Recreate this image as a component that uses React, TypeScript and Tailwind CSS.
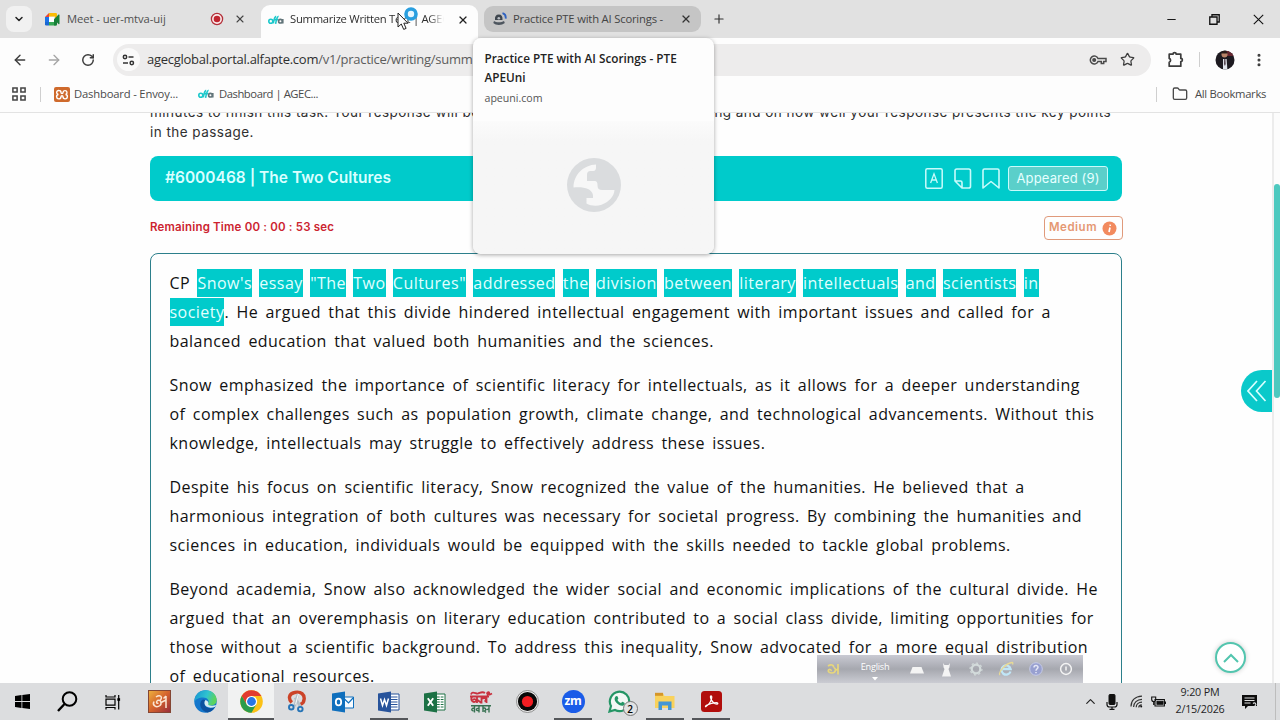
import React from "react";
import { ArrowLeft, ArrowRight, ChevronDown, ChevronUp, X, Plus, Minus, Star, Folder, RotateCw, MoreVertical } from "lucide-react";

const passage: string[][] = [
  [
    "balanced education that valued both humanities and the sciences.",
  ],
  [
    "Snow emphasized the importance of scientific literacy for intellectuals, as it allows for a deeper understanding",
    "of complex challenges such as population growth, climate change, and technological advancements. Without this",
    "knowledge, intellectuals may struggle to effectively address these issues.",
  ],
  [
    "Despite his focus on scientific literacy, Snow recognized the value of the humanities. He believed that a",
    "harmonious integration of both cultures was necessary for societal progress. By combining the humanities and",
    "sciences in education, individuals would be equipped with the skills needed to tackle global problems.",
  ],
  [
    "Beyond academia, Snow also acknowledged the wider social and economic implications of the cultural divide. He",
    "argued that an overemphasis on literary education contributed to a social class divide, limiting opportunities for",
    "those without a scientific background. To address this inequality, Snow advocated for a more equal distribution",
    "of educational resources.",
  ],
];

const marked = ["Snow's", "essay", "\"The", "Two", "Cultures\"", "addressed", "the", "division", "between", "literary", "intellectuals", "and", "scientists", "in"];

function Mark({ children }: { children: React.ReactNode }) {
  return <span className="inline-block h-[28px] bg-[#00cbcb] leading-[28px] text-[#e2ffff]">{children}</span>;
}

function AlfaLogo() {
  return (
    <svg className="shrink-0" width="16" height="10" viewBox="0 0 16 10" fill="none" strokeWidth="1.6">
      <circle cx="2.8" cy="6.2" r="2" stroke="#1cc8cb" />
      <path d="M5.3 8.4C6 4 7 1.6 8.2 1.4M7.6 8.8C8.4 4 9.2 1.4 10.6 1.2M6 4.6h4.4" stroke="#1cc8cb" />
      <circle cx="12.4" cy="6.2" r="1.8" stroke="#62757a" />
      <path d="M14.8 4v4.4" stroke="#62757a" />
    </svg>
  );
}

function MeetLogo() {
  return (
    <svg className="shrink-0" width="16" height="13" viewBox="0 0 16 13">
      <path d="M4 0h6.500v3.500H4z" fill="#fbbc04" />
      <path d="M0 4l4-4v4z" fill="#ea4335" />
      <path d="M0 4h4v5H0z" fill="#1a73e8" />
      <path d="M0 9h4v3.500H1.200A1.200 1.200 0 0 1 0 11.300z" fill="#1967d2" />
      <path d="M4 9h7.500v3.500H4z" fill="#34a853" />
      <path d="M10 3.500V0h.8a1.200 1.200 0 0 1 1.200 1.200V4l-2 2.300z" fill="#fbbc04" />
      <path d="M9 6.300 13.500 1.600c.5-.4 1-.2 1 .4v8.600c0 .6-.5.8-1 .4L12 9.600v1.700a1.200 1.200 0 0 1-1.200 1.200H9z" fill="#188038" />
      <path d="M4 4h5v5H4z" fill="#fff" />
    </svg>
  );
}

function TabStrip() {
  return (
    <div className="flex h-[38px] shrink-0 items-start bg-[#e1e1e1] text-[11.25px] text-[#2e2e2e]">
      <div className="ml-[6px] mt-[6px] flex h-[26px] w-[26px] items-center justify-center rounded-lg bg-[#f1f1f1]">
        <ChevronDown size={12} strokeWidth={3} className="text-[#222]" />
      </div>
      <div className="flex h-[38px] w-[229px] items-center pl-[13px] pr-[15px]">
        <MeetLogo />
        <span className="ml-[6px] flex-1 whitespace-nowrap tracking-[-0.08px] text-[#505050]">Meet - uer-mtva-uij</span>
        <svg width="14" height="14" viewBox="0 0 14 14"><circle cx="7" cy="7" r="5.600" fill="#fbeaea" stroke="#b3303a" strokeWidth="1.300" /><circle cx="7" cy="7" r="3.300" fill="#c02530" /></svg>
        <X size={12} strokeWidth={2.2} className="ml-[10px] text-[#444]" />
      </div>
      <div className="mt-[5px] flex h-[33px] w-[217px] items-center rounded-t-[9px] bg-[#fdfdfd] pb-[4px] pl-[7px] pr-[9px]">
        <AlfaLogo />
        <span className="ml-[6px] w-[154px] overflow-hidden whitespace-nowrap tracking-[-0.28px] [mask-image:linear-gradient(to_right,black_90%,transparent)]">Summarize Written Text | AGEC</span>
        <span className="flex-1" />
        <X size={12} strokeWidth={2.4} className="text-[#222]" />
      </div>
      <div className="ml-[6px] mt-[6px] flex h-[26px] w-[217px] items-center rounded-[9px] bg-[#c5c5c5] pl-[9px] pr-[9px] text-[#444]">
        <svg className="shrink-0" width="14" height="14" viewBox="0 0 14 14">
          <path d="M2 8c-.4-3.600 1-5.500 3.800-5.500S9.800 4.500 9.500 8z" fill="#3f464e" />
          <path d="M1 9c2 1.800 7.500 1.800 10 0l.8 2c-3 2.600-9 2.600-11.500 0z" fill="#4d555e" />
          <circle cx="5.800" cy="6.300" r="1.300" fill="#b9bec4" />
          <path d="M9.500 1.200c2.300.6 3.500 2.600 3.200 5.400" fill="none" stroke="#2f62c0" strokeWidth="1.800" />
        </svg>
        <span className="ml-[6px] w-[152px] shrink-0 overflow-hidden whitespace-nowrap tracking-[-0.19px]">Practice PTE with AI Scorings - </span>
        <span className="flex-1" />
        <X size={12} strokeWidth={2.4} className="text-[#333]" />
      </div>
      <Plus size={14} strokeWidth={2} className="ml-[11px] mt-[12px] text-[#333]" />
      <div className="ml-auto mr-[16px] flex h-[38px] items-center text-[#111]">
        <Minus size={13} strokeWidth={1.800} />
        <svg className="ml-[31px]" width="11" height="11" viewBox="0 0 10 10" fill="none" stroke="currentColor" strokeWidth="1.200"><path d="M.7 2.700h6.600v6.600H.7zM2.700 2.500V.7h6.600v6.600H7.500" /></svg>
        <svg className="ml-[33px]" width="11" height="11" viewBox="0 0 11 11" stroke="currentColor" strokeWidth="1.100"><path d="M.8.8l9.400 9.400M10.200.8.8 10.200" /></svg>
      </div>
    </div>
  );
}

function Toolbar() {
  return (
    <div className="flex h-[42px] shrink-0 items-center bg-[#fdfdfd] pl-[12px] pt-px text-[#3c3c3c]">
      <ArrowLeft size={16} strokeWidth={2.100} />
      <ArrowRight size={16} strokeWidth={2} className="ml-[18px] text-[#a5a5a5]" />
      <RotateCw size={14} strokeWidth={2.500} className="ml-[19px]" />
      <div className="ml-[18px] flex h-[32px] w-[1038px] items-center rounded-full bg-[#edecec] pl-[4px] pr-[16px]">
        <span className="flex h-[23px] w-[23px] items-center justify-center rounded-full bg-[#fafafa]">
          <svg width="13" height="12" viewBox="0 0 13 12" fill="none" stroke="#333" strokeWidth="1.500"><circle cx="3" cy="3" r="1.700" /><path d="M6.500 3h5M1 9h5" /><circle cx="9.800" cy="9" r="1.700" /></svg>
        </span>
        <span className="ml-[7px] flex-1 whitespace-nowrap text-[13px] tracking-[-0.27px] text-[#2f2f2f]">agecglobal.portal.alfapte.com<span className="text-[#5c5c5c]">/v1/practice/writing/summ</span></span>
        <svg width="18" height="12" viewBox="0 0 18 12" fill="none" stroke="#4a4a4a" strokeWidth="1.500"><path d="M9 4.500a4 4 0 1 0 0 3h3.300v1.900h2.400V7.500H17v-3z" /><circle cx="5.200" cy="6" r="1.300" fill="#4a4a4a" /></svg>
        <Star size={15} strokeWidth={2} className="ml-[13px]" />
      </div>
      <svg className="ml-[16px]" width="18" height="17" viewBox="0 0 18 17" fill="none" stroke="#3c3c3c" strokeWidth="1.700"><path d="M2.200 3.200H6a1.600 1.600 0 0 1 3.200 0h4.600v4.200a1.600 1.600 0 0 1 0 3.200v4.600H2.200v-4a2 2 0 0 0 0-3.800z" strokeLinejoin="round" /></svg>
      <span className="ml-[14px] h-[15px] w-px bg-[#cfcfcf]" />
      <svg className="ml-[15px]" width="20" height="20" viewBox="0 0 20 20">
        <defs><clipPath id="av"><circle cx="10" cy="10" r="9.500" /></clipPath></defs>
        <g clipPath="url(#av)">
          <path d="M0 0h20v20H0z" fill="#1d1a20" /><path d="M11 1h9v5h-9z" fill="#672730" />
          <circle cx="9.500" cy="4.500" r="3" fill="#b98468" /><path d="M6.500 3.500c0-4 6-4 6 0z" fill="#2a1c19" />
          <path d="M8 9h3.600l.8 11H8z" fill="#dfe3ea" /><path d="M9.200 9h1.200l.3 5-.8 2-.9-2z" fill="#51404a" />
        </g>
      </svg>
      <MoreVertical size={16} strokeWidth={2.600} className="ml-[16px]" />
    </div>
  );
}

function Bookmarks() {
  return (
    <div className="flex h-[33px] shrink-0 items-center border-b border-[#e3e3e3] bg-[#fdfdfd] pb-[4px] pl-[12px] pr-[14px] text-[11.25px] text-[#4a4a4a]">
      <svg width="14" height="14" viewBox="0 0 14 14" fill="none" stroke="#444" strokeWidth="1.500"><path d="M.9.9h4.200v4.200H.9zM8.900.9h4.200v4.200H8.900zM.9 8.900h4.200v4.200H.9zM8.900 8.900h4.200v4.200H8.900z" /></svg>
      <span className="ml-[14px] h-[15px] w-px bg-[#cfcfcf]" />
      <svg className="ml-[13px]" width="16" height="15" viewBox="0 0 16 15">
        <rect width="16" height="15" rx="2" fill="#cf6a2c" />
        <path d="M5 3.500a2 2 0 0 1 2 2 1 1 0 0 0 2 0 2 2 0 1 1 2.600 2 2.200 2.200 0 1 1-2.600 2.200 1 1 0 0 0-2 0A2.200 2.200 0 1 1 4.400 7.500 2 2 0 0 1 5 3.500z" fill="none" stroke="#fff" strokeWidth="1.400" />
      </svg>
      <span className="ml-[4px] w-[124px] whitespace-nowrap tracking-[-0.18px]">Dashboard - Envoy...</span>
      <AlfaLogo />
      <span className="ml-[5px] whitespace-nowrap tracking-[-0.45px]">Dashboard | AGEC...</span>
      <span className="ml-auto h-[15px] w-px bg-[#cfcfcf]" />
      <Folder size={16} strokeWidth={2} className="ml-[15px]" />
      <span className="ml-[7px] w-[71px] whitespace-nowrap tracking-[-0.3px]">All Bookmarks</span>
    </div>
  );
}

function QuestionHeader() {
  return (
    <div className="flex h-[45px] shrink-0 items-center rounded-[8px] bg-[#00cbcb] pl-[15px] pr-[14px] font-['Inter',sans-serif] text-white">
      <h1 className="flex-1 whitespace-nowrap pb-px text-[15.5px] font-semibold text-[#d9ffff]">#6000468 | The Two Cultures</h1>
      <svg width="18" height="21" viewBox="0 0 18 21" fill="none" stroke="#c8fbfb" strokeWidth="1.500"><rect x=".8" y=".8" width="16.400" height="19.400" rx="1.500" /><path d="M5.600 15 9 5.800 12.400 15M6.800 12h4.400" strokeWidth="1.300" /></svg>
      <svg className="ml-[11px]" width="18" height="21" viewBox="0 0 18 21" fill="none" stroke="#c8fbfb" strokeWidth="1.600" strokeLinejoin="round"><path d="M1 13V2.800A1.800 1.800 0 0 1 2.800 1h11.900a1.800 1.800 0 0 1 1.800 1.800v15.400a1.800 1.800 0 0 1-1.800 1.800H8zM1 13h5.500A1.500 1.500 0 0 1 8 14.500V20" /></svg>
      <svg className="ml-[10px]" width="18" height="21" viewBox="0 0 18 21" fill="none" stroke="#c8fbfb" strokeWidth="1.600" strokeLinejoin="round"><path d="M1 20V2.500A1.500 1.500 0 0 1 2.500 1h13A1.500 1.500 0 0 1 17 2.500V20l-8-6.500z" /></svg>
      <div className="ml-[8px] flex h-[25px] w-[100px] items-center justify-center whitespace-nowrap rounded-[3px] border border-[#c8fbfb] bg-[#5bcfca] text-[13px] tracking-[0.15px] text-[#e6ffff]">Appeared (9)</div>
    </div>
  );
}

function Passage() {
  return (
    <div className="mt-[13px] flex h-[460px] shrink-0 flex-col gap-[15px] rounded-t-[8px] border border-[#2c7f8b] pl-[18.5px] pt-[15px] text-[16px] leading-[29px] tracking-[0.46px] text-[#111] [word-spacing:2.72px]">
      {passage.map((lines, i) => (
        <div key={i} className="whitespace-nowrap">
          {i === 0 && (
            <>
              <div className="h-[29px]">CP {marked.map((w) => <React.Fragment key={w}><Mark>{w}</Mark> </React.Fragment>)}</div>
              <div className="h-[29px]"><Mark>society</Mark>. He argued that this divide hindered intellectual engagement with important issues and called for a</div>
            </>
          )}
          {lines.map((l) => <div key={l}>{l}</div>)}
        </div>
      ))}
    </div>
  );
}

function HoverCard() {
  return (
    <div className="absolute left-[473px] top-[38px] flex h-[216px] w-[241px] flex-col overflow-hidden rounded-[8px] bg-[#fdfdfd] text-[#222] shadow-[0_1px_4px_rgba(0,0,0,0.35)]">
      <div className="h-[83px] px-[11.500px] pt-[11px]">
        <div className="whitespace-nowrap text-[11.75px] font-semibold leading-[19px]">Practice PTE with AI Scorings - PTE<br />APEUni</div>
        <div className="mt-[3px] text-[10.600px] leading-[16px] text-[#555]">apeuni.com</div>
      </div>
      <div className="flex flex-1 items-center justify-center bg-gradient-to-b from-[#fbfbfb] to-[#f6f6f6] to-15% pb-[6px]">
        <svg width="54" height="54" viewBox="0 0 54 54">
          <circle cx="27" cy="27" r="27" fill="#dadcde" />
          <path d="M29 6.400C17 7 6.500 16 6.500 29.500c5-.5 11-.3 14.500 1.500 4 2 5.500 5 5 9h-6.500v5.500c4 2.300 10 3 15 1.300C42 44 47 38.500 47.500 32H35c-3 0-4.500-1.500-4.500-4.500 0-3-.5-4.500-3-4.500H20v-6c0-2.500 1-4 3.500-4h2.700c2 0 2.800-1.500 2.800-3z" fill="#f7f7f7" />
        </svg>
      </div>
    </div>
  );
}

function Pointer() {
  return (
    <svg className="absolute left-[397px] top-[6px]" width="22" height="25" viewBox="0 0 22 25">
      <circle cx="14" cy="8" r="5" fill="#e8f7ff" stroke="#2a9fdf" strokeWidth="3.600" />
      <path d="M1 7v14l3.300-3 2.400 5.400 2.400-1-2.300-5.200H11z" fill="#fff" stroke="#222" strokeWidth="1" />
    </svg>
  );
}

function LanguageBar() {
  return (
    <div className="absolute left-[817px] top-[655px] flex h-[28px] w-[266px] items-center bg-gradient-to-b from-[#c9cad3] via-[#a6a8af] to-[#cbccd3] text-white">
      <svg className="ml-[9px]" width="14" height="14" viewBox="0 0 14 14" fill="none" stroke="#e8d77c" strokeWidth="1.700"><path d="M2 4C5 1.800 8 3 7.500 5.500M7.500 5.500C10.500 6 10 11 6 11 3.500 11 1.500 9.500 2.500 8 4 6.800 5.500 8 5 9M9 8.500 12 7M12 2v10.500" /></svg>
      <div className="ml-[20px] mt-[2px] flex w-[30px] flex-col items-center">
        <span className="text-[9.200px] leading-[14px] tracking-[-0.25px]">English</span>
        <svg className="mt-[3px]" width="6" height="4" viewBox="0 0 6 4"><path d="M0 0h6L3 3.500z" fill="#fff" /></svg>
      </div>
      <svg className="ml-[20px] mt-[3px]" width="14" height="7" viewBox="0 0 14 7"><path d="M2.500 0h9L14 6.500H0z" fill="#f4f4f4" /></svg>
      <svg className="ml-[17px]" width="11" height="15" viewBox="0 0 11 15"><path d="M2 1l1.500 2h4L9 1l-.6 4.500L7.500 7l2.500 7.500H1L3.500 7 2.600 5.500z" fill="#f4f4f4" /></svg>
      <svg className="ml-[17px]" width="14" height="14" viewBox="0 0 15 15" fill="none" stroke="#d3dbdb"><circle cx="7.500" cy="7.500" r="4.600" strokeWidth="2.400" /><circle cx="7.500" cy="7.500" r="6.400" strokeWidth="1.200" strokeDasharray="2.300 2.600" /></svg>
      <svg className="ml-[15px]" width="16" height="16" viewBox="0 0 16 16" fill="none"><path d="M12.500 10.500A4.600 4.600 0 1 1 12.600 8H5" stroke="#c0e6f7" strokeWidth="2.300" /><path d="M2 14C0 12 6 3 14 1.500c1-.1 1 1 .5 2" stroke="#e8da95" strokeWidth="1.300" /></svg>
      <svg className="ml-[15px]" width="14" height="14" viewBox="0 0 14 14" fill="#98a0d0" stroke="#c6cbe8"><circle cx="7" cy="7" r="6.300" /><path d="M5 5.500C5 3 9 3 9 5.300 9 6.500 7 7 7 8.700M7 10v1.300" fill="none" stroke="#e6e8f6" strokeWidth="1.500" /></svg>
      <svg className="ml-[16px]" width="14" height="14" viewBox="0 0 14 14" fill="none" stroke="#f4f4f4" strokeWidth="1.500"><circle cx="7" cy="7" r="5.400" /><path d="M7 4.500v4" /></svg>
    </div>
  );
}

function OfficeIcon({ kind }: { kind: "outlook" | "word" | "excel" }) {
  const color = kind === "outlook" ? "#0f6fbd" : kind === "word" ? "#27539b" : "#1c7145";
  return (
    <svg width="22" height="22" viewBox="0 0 22 22">
      {kind === "outlook" ? (
        <><path d="M11 6h10.500v11H11z" fill="#f7fbff" stroke={color} /><path d="M11.500 7l5 5 5-5.500" fill="none" stroke={color} strokeWidth="1.200" /></>
      ) : (
        <><path d="M11 3h10v16H11z" fill="#fff" stroke={color} /><path d="M13 6h6.500M13 8.500h6.500M13 11h6.500M13 13.500h6.500M13 16h6.500" stroke={color} strokeWidth="1.100" />{kind === "excel" && <path d="M16.200 4v14" stroke="#fff" />}</>
      )}
      <path d="M0 2.500 13 .5v21L0 19.500z" fill={color} />
      {kind === "outlook" && <ellipse cx="6.500" cy="11" rx="2.700" ry="3.400" fill="none" stroke="#fff" strokeWidth="1.800" />}
      {kind === "word" && <path d="M2.500 7.500 4.500 14.500 6.500 8.500 8.500 14.500 10.500 7.500" fill="none" stroke="#fff" strokeWidth="1.500" />}
      {kind === "excel" && <path d="M3.800 7.300 9.200 14.700M9.200 7.300 3.800 14.700" stroke="#fff" strokeWidth="1.900" />}
    </svg>
  );
}

function TaskItem({ children, open, active, narrow }: { children: React.ReactNode; open?: boolean; active?: boolean; narrow?: boolean }) {
  return (
    <div className={(narrow ? "w-[45px]" : "w-[46px]") + " relative flex h-full items-center justify-center " + (active ? "bg-[#f1f2f2]" : "")}>
      {children}
      {(open || active) && <span className={"absolute bottom-0 h-[2px] bg-[#54565a] " + (active ? "inset-x-0" : "inset-x-[4px]")} />}
    </div>
  );
}

function Taskbar() {
  return (
    <div className="flex h-[37px] shrink-0 items-center bg-[#dcdddf]">
      <TaskItem narrow><svg width="15" height="15" viewBox="0 0 15 15" fill="#000"><path d="M0 2 6.500 1.100v6H0zM7.300 1 15 0v7.100H7.300zM0 7.900h6.500v6L0 13zM7.300 7.900H15V15l-7.700-1z" /></svg></TaskItem>
      <TaskItem narrow><svg width="21" height="21" viewBox="0 0 21 21" fill="none" stroke="#000" strokeWidth="2"><circle cx="12.500" cy="8" r="6.800" /><path d="M7.500 13 1 20" strokeWidth="2.400" /></svg></TaskItem>
      <TaskItem narrow><svg width="16" height="16" viewBox="0 0 16 16" fill="none" stroke="#000" strokeWidth="1.200"><path d="M1 1v2h9V1M1 5.200h9v6H1zM1 15.500v-2h9v2M13.700 1v14.500" /><path d="M12.300 5.500h2.800" strokeWidth="2.600" /></svg></TaskItem>
      <div className="w-px" />
      <TaskItem>
        <svg width="23" height="23" viewBox="0 0 23 23"><defs><linearGradient id="av1" x1="0" y1="0" x2="1" y2="1"><stop stopColor="#eeb23e" /><stop offset=".5" stopColor="#d4622d" /><stop offset="1" stopColor="#962b3c" /></linearGradient></defs><rect x=".5" y=".5" width="22" height="22" fill="url(#av1)" stroke="#844634" /><path d="M8 7C12 4 15 7 12.500 10M18 6V18M6 11.500C4 15 8 18.500 12 15.500 14.500 13 12 9 9.500 10.500 7.500 12.500 9 14 10.500 13M13 12.500 18 10M15.500 8.500 18 6" fill="none" stroke="#fbe6d4" strokeWidth="1.500" /></svg>
      </TaskItem>
      <TaskItem>
        <svg width="23" height="23" viewBox="0 0 23 23"><defs><linearGradient id="ed" x1="0" y1="0" x2="1" y2=".3"><stop stopColor="#1693d2" /><stop offset=".6" stopColor="#2fc3d0" /><stop offset="1" stopColor="#5cd45c" /></linearGradient></defs><circle cx="11.500" cy="11.500" r="11.200" fill="#1477cc" /><path d="M.5 10C1.500 4 6 .3 11.500.3c7 0 11.200 5 11.200 9.700 0 4-3 5.500-6 5.500-2.500 0-3.300-1-2.600-2 1.500-2.500-.3-6-5-6C5 7.500 1.500 9 .5 12z" fill="url(#ed)" /><path d="M8 10c-4 4-1 11 5.500 12.500 3-.6 6-2.500 7.500-5.500-3.500 2-8.500 1.500-10-1.500-1-2-.5-4 .5-5C10.500 9.500 9 9 8 10z" fill="#0d519f" /><path d="M11.200 10.300c-1.300 1.800-1 5 1.200 6.300 2.500 1.600 6.200 1.300 8.800.1l1-1.800c-2 .8-8 1.600-8-.6.8-1.500-.5-4-3-4z" fill="#d8ecf0" /></svg>
      </TaskItem>
      <TaskItem active>
        <svg width="23" height="23" viewBox="0 0 23 23"><circle cx="11.500" cy="11.500" r="11.300" fill="#fbc116" /><path d="M1.700 5.900A11.300 11.300 0 0 1 21.300 5.900H11.500L6.600 14.300z" fill="#e23b30" /><path d="M1.700 5.900A11.300 11.300 0 0 0 11.500 22.800L16.400 14.300 11.500 17 6.600 14.300z" fill="#2b9c4b" /><circle cx="11.500" cy="11.500" r="5.600" fill="#fff" /><circle cx="11.500" cy="11.500" r="4.400" fill="#2876e5" /></svg>
      </TaskItem>
      <TaskItem>
        <svg width="20" height="23" viewBox="0 0 21 24" fill="none"><path d="M5 13C1 9 2 3.500 8 2.500c7-1.500 10.500 2.500 10 7-.3 3-2 5-4 5.500" stroke="#cc4328" strokeWidth="3.600" /><path d="M11.500 4 8 17M8.500 8l6 10" stroke="#b4bec6" strokeWidth="2.800" /><path d="M12 4 9 15" stroke="#f2f6f8" strokeWidth="1.200" /><circle cx="4.500" cy="18" r="2.400" stroke="#2674b6" strokeWidth="2" /><circle cx="14" cy="20" r="2.400" stroke="#2674b6" strokeWidth="2" /></svg>
      </TaskItem>
      <TaskItem><OfficeIcon kind="outlook" /></TaskItem>
      <TaskItem open><OfficeIcon kind="word" /></TaskItem>
      <TaskItem><OfficeIcon kind="excel" /></TaskItem>
      <TaskItem>
        <svg width="24" height="24" viewBox="0 0 24 24" fill="none"><g stroke="#c8323f" strokeWidth="1.800"><path d="M2 4.500C3 .5 7 4 9 3.500S13 1 16 3M1 6.500h19M3 7C1 10 4 13 6.500 11.500S5 8 4 10M8 6.500V13M8.500 10l4 3M12.500 6.500V13.500M12.500 9c4-2.500 6 1 3 2.500M17.500 6V13M18 4c0-2 3-2.500 2-.5L18 5.500M20 5l3-1.500" /></g><path d="M2 15.800h20M5.500 16v6.500M5.500 18C2 18 2 20.500 4.500 21M10 16v6.500M10 18.500c-3.500-1-3.500 3 0 2M14 16v6M14 18.500c2-1.500 4 1 1.500 2.500L17 22.500M20 16v6.500M20 18.500 17.500 20" stroke="#377151" strokeWidth="1.400" /></svg>
      </TaskItem>
      <TaskItem><svg width="23" height="23" viewBox="0 0 23 23"><circle cx="11.500" cy="11.500" r="11" fill="#eee" stroke="#777" strokeWidth=".8" /><circle cx="11.500" cy="11.500" r="9.600" fill="#080808" /><circle cx="11.500" cy="11.500" r="5.600" fill="#f21d22" /></svg></TaskItem>
      <TaskItem open><div className="flex h-[23px] w-[23px] items-center justify-center rounded-full bg-[#1a5ce8] pb-[2px] text-[12px] font-bold leading-none tracking-[-0.4px] text-white">zm</div></TaskItem>
      <TaskItem>
        <div className="relative">
          <svg width="23" height="23" viewBox="0 0 23 23"><path d="M1.500 21.500 3 16A9.700 9.700 0 1 1 7 20z" fill="#f3f8f5" stroke="#249565" strokeWidth="2.200" /><path d="M7.500 6.500c1-1 2-.6 2.200.2l.6 1.600c.2.600-.8 1.300-.8 1.700.8 1.500 2 2.500 3.500 3 .5 0 1-1.300 1.600-1.200l1.800.9c.6.300.3 2-.6 2.600-3.200 2.300-10.500-3.500-9-7.500z" fill="#249565" /></svg>
          <span className="absolute left-[15px] top-[11px] flex h-[15px] w-[15px] items-center justify-center rounded-full border border-[#777] bg-[#e1e2e3] text-[10px] font-semibold leading-none text-black">2</span>
        </div>
      </TaskItem>
      <TaskItem open><svg width="20" height="19" viewBox="0 0 20 19"><path d="M0 1h8l1.500 3H19.500v12H0z" fill="#f9d25c" /><path d="M0 .8h8v3H0z" fill="#d5962a" /><path d="M3.500 9.500h13V18H13v-4.500H7V18H3.500z" fill="#4296d4" /></svg></TaskItem>
      <TaskItem open><svg width="21" height="21" viewBox="0 0 21 21"><rect width="21" height="21" rx="3.500" fill="#b10e0c" /><path d="M5 15.500c3-1.500 6-6.500 5.800-9.500-.2-1.800-1.600-1.300-1.400.2.400 3.500 4 7 6.600 7 1.400-.2 1-1.600-.8-1.600-3.500 0-7 1.200-9.700 2.600-1.400 1-1.200 2-.5 1.300z" fill="none" stroke="#fff" strokeWidth="1.200" /></svg></TaskItem>
      <div className="ml-auto mr-[4px] flex h-full items-center border-r border-[#bdbdbd] text-[#222]">
        <ChevronUp size={15} strokeWidth={1.900} />
        <svg className="ml-[8px]" width="12" height="16" viewBox="0 0 12 16" fill="none" stroke="#111"><rect x="3" y=".5" width="6" height="10" rx="1" fill="#111" /><path d="M1 8v2.500c0 1.400 1 2.500 2.500 2.500h5C10 13 11 12 11 10.500V8M6 13v2.500M3.500 15.400h5" strokeWidth="1.200" /></svg>
        <svg className="ml-[12px]" width="13" height="13" viewBox="0 0 13 13" fill="none" stroke="#333" strokeWidth="1.200"><path d="M1 11.500C1 5.500 5 1.500 12 1.200M3.600 12C3.600 7.800 7 4.500 12 4.300M6.200 12.200c0-2.700 2.300-5 5.800-5.100M8.800 12.500c0-1.500 1.200-2.500 3-2.600" /><circle cx="11.200" cy="11.600" r="1" fill="#111" stroke="none" /></svg>
        <svg className="ml-[8px]" width="15" height="12" viewBox="0 0 15 12" fill="none" stroke="#111" strokeWidth="1.100"><path d="M4 3.500h9.400v6.500H4zM14.500 5.500V8M.7 1h4v2.500a2 2 0 0 1-4 0zM2.700 5.500V9" /><path d="M6 5.300h6v3H6z" fill="#111" /></svg>
        <div className="ml-[8px] flex w-[52px] flex-col items-center whitespace-nowrap pb-px text-[10.750px] leading-[17px] tracking-[-0.2px] text-[#1f1f1f]"><span>9:20 PM</span><span>2/15/2026</span></div>
        <svg className="ml-[15px] mr-[17px]" width="17" height="16" viewBox="0 0 17 16"><path d="M1 1h15v11h-9l-3 3v-3H1z" fill="#0c0c0c" /><path d="M3.500 4h10M3.500 6.500h10M3.500 9h6" stroke="#e0e0e0" strokeWidth="1" /><path d="M12 9.500c2-2 4 1 2 2.500l-2 2" fill="none" stroke="#dcdddf" strokeWidth="1.100" /></svg>
      </div>
    </div>
  );
}

export default function App() {
  return (
    <div className="relative flex h-[720px] w-[1280px] flex-col overflow-hidden bg-[#fefefe] font-['Open_Sans','Noto_Sans',sans-serif]">
      <TabStrip />
      <Toolbar />
      <Bookmarks />
      <div className="flex min-h-0 flex-1">
        <main className="flex min-w-0 flex-1 flex-col overflow-hidden pl-[150px] pr-[150px]">
          <div className="-mt-[11px] shrink-0 whitespace-nowrap font-['Inter',sans-serif] text-[13.5px] leading-[20px] tracking-[0.46px] text-[#303030]">
            minutes to finish this task. Your response will be judged on the quality of your writing and on how well your response presents the key points<br />in the passage.
          </div>
          <div className="h-[14px] shrink-0" />
          <QuestionHeader />
          <div className="mt-[15px] flex h-[24px] shrink-0 items-center justify-between font-['Inter',sans-serif] text-[11.5px] font-semibold">
            <span className="whitespace-nowrap tracking-[0.18px] text-[#cc2430]">Remaining Time 00 : 00 : 53 sec</span>
            <div className="-mr-px flex h-[24px] w-[79px] items-center rounded-[4px] border border-[#e09a7b] pl-[4px] text-[#e59873]">
              <span className="w-[53px] tracking-[0.5px]">Medium</span>
              <svg width="15" height="15" viewBox="0 0 15 15"><circle cx="7.500" cy="7.500" r="7" fill="#f28a5e" /><path d="M8 6.500 7 11M8.300 3.600l-.2 1.200" stroke="#fff" strokeWidth="1.700" /></svg>
            </div>
          </div>
          <Passage />
        </main>
        <div className="flex w-[8px] shrink-0 justify-end border-l-2 border-[#ececec] bg-[#fcfcfc] pt-[71px]">
          <div className="h-[214px] w-[7px] rounded-full bg-[#4dc9bf]" />
        </div>
      </div>
      <Taskbar />
      <div className="absolute left-[1241px] top-[370px] flex h-[42px] w-[31px] items-center overflow-hidden rounded-l-full bg-[#0ac9ca] pl-[6px]">
        <svg width="20" height="22" viewBox="0 0 20 22" fill="none" stroke="#d8ffff" strokeWidth="1.700"><path d="M10 1 1 11l9 10M18.500 1l-9 10 9 10" /></svg>
      </div>
      <div className="absolute left-[1215px] top-[642px] flex h-[31px] w-[31px] items-center justify-center rounded-full border-2 border-[#52c5ae] bg-white shadow-[0_0_5px_rgba(0,0,0,0.2)]">
        <svg width="16" height="10" viewBox="0 0 16 10" fill="none" stroke="#52c5ae" strokeWidth="2"><path d="M1 9l7-7 7 7" /></svg>
      </div>
      <LanguageBar />
      <HoverCard />
      <Pointer />
    </div>
  );
}
